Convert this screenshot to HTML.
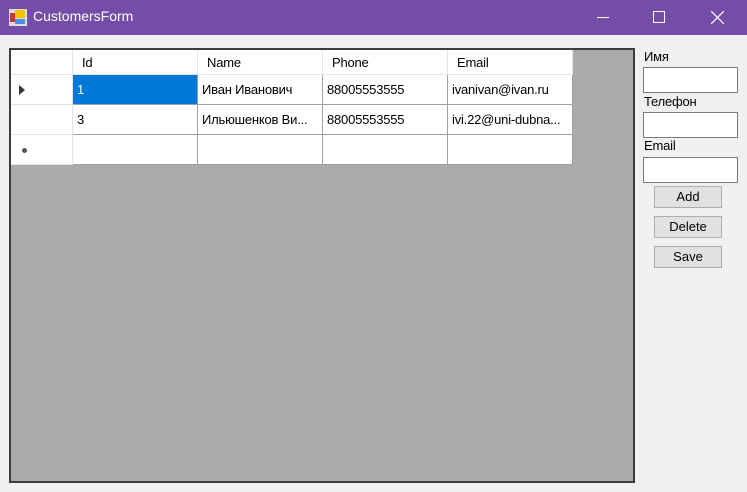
<!DOCTYPE html>
<html><head><meta charset="utf-8"><style>
*{margin:0;padding:0;box-sizing:border-box}
body{width:747px;height:492px;background:#f0f0f0;font-family:"Liberation Sans",sans-serif;font-size:13px;color:#000;position:relative;overflow:hidden}
.title{position:absolute;left:0;top:0;width:747px;height:35px;background:#744da9;color:#fff}
.title .t{position:absolute;left:33px;top:8px;font-size:14px}
.abs{position:absolute}
.grid{position:absolute;left:9px;top:48px;width:626px;height:435px;background:#ababab;border:2px solid #3c3c3c}
.c{position:absolute;background:#fff;border-right:1px solid #a0a0a0;border-bottom:1px solid #a0a0a0;padding-left:4px;line-height:29px;white-space:nowrap;overflow:hidden;letter-spacing:-0.2px}
.h{border-color:#e4e4e4;line-height:25px;padding-left:9px}
.rh{border-color:#e4e4e4}
.lbl{position:absolute;left:644px;font-size:13px;letter-spacing:-0.2px}
.tb{position:absolute;left:643px;width:95px;height:26px;background:#fff;border:1px solid #7a7a7a}
.btn{position:absolute;left:654px;width:68px;height:22px;background:#e1e1e1;border:1px solid #adadad;text-align:center;line-height:20px}
</style></head><body>
<div class="title">
<svg class="abs" style="left:9px;top:9px" width="18" height="17"><rect x="0" y="0" width="18" height="17" fill="#ddd"/><rect x="1" y="4" width="5" height="9" fill="#c33"/><rect x="6" y="1" width="10" height="8" fill="#f5c400"/><rect x="6" y="10" width="10" height="5" fill="#4a90e2"/></svg>
<span class="t">CustomersForm</span>
<div class="abs" style="left:597px;top:17px;width:12px;height:1px;background:#fff"></div>
<div class="abs" style="left:653px;top:11px;width:12px;height:12px;border:1px solid #fff"></div>
<svg class="abs" style="left:711px;top:11px" width="13" height="13"><path d="M0 0L13 13M13 0L0 13" stroke="#fff" stroke-width="1.2"/></svg>
</div>
<div class="grid">
<div class="c rh" style="left:0;top:0;width:62px;height:25px"></div>
<div class="c h" style="left:62px;top:0;width:125px;height:25px">Id</div>
<div class="c h" style="left:187px;top:0;width:125px;height:25px">Name</div>
<div class="c h" style="left:312px;top:0;width:125px;height:25px">Phone</div>
<div class="c h" style="left:437px;top:0;width:125px;height:25px">Email</div>

<div class="c rh" style="left:0;top:25px;width:62px;height:30px"><svg class="abs" style="left:8px;top:10px" width="6" height="10"><path d="M0 0L6 5L0 10Z" fill="#333"/></svg></div>
<div class="c" style="left:62px;top:25px;width:125px;height:30px;background:#0078d7;color:#fff">1</div>
<div class="c" style="left:187px;top:25px;width:125px;height:30px">Иван Иванович</div>
<div class="c" style="left:312px;top:25px;width:125px;height:30px">88005553555</div>
<div class="c" style="left:437px;top:25px;width:125px;height:30px">ivanivan@ivan.ru</div>

<div class="c rh" style="left:0;top:55px;width:62px;height:30px"></div>
<div class="c" style="left:62px;top:55px;width:125px;height:30px">3</div>
<div class="c" style="left:187px;top:55px;width:125px;height:30px">Ильюшенков Ви...</div>
<div class="c" style="left:312px;top:55px;width:125px;height:30px">88005553555</div>
<div class="c" style="left:437px;top:55px;width:125px;height:30px">ivi.22@uni-dubna...</div>

<div class="c rh" style="left:0;top:85px;width:62px;height:30px"><div class="abs" style="left:11px;top:13px;width:5px;height:5px;border-radius:50%;background:#555"></div></div>
<div class="c" style="left:62px;top:85px;width:125px;height:30px"></div>
<div class="c" style="left:187px;top:85px;width:125px;height:30px"></div>
<div class="c" style="left:312px;top:85px;width:125px;height:30px"></div>
<div class="c" style="left:437px;top:85px;width:125px;height:30px"></div>
</div>
<div class="lbl" style="top:49px">Имя</div>
<div class="tb" style="top:67px"></div>
<div class="lbl" style="top:94px">Телефон</div>
<div class="tb" style="top:112px"></div>
<div class="lbl" style="top:138px">Email</div>
<div class="tb" style="top:157px"></div>
<div class="btn" style="top:186px">Add</div>
<div class="btn" style="top:216px">Delete</div>
<div class="btn" style="top:246px">Save</div>
</body></html>
